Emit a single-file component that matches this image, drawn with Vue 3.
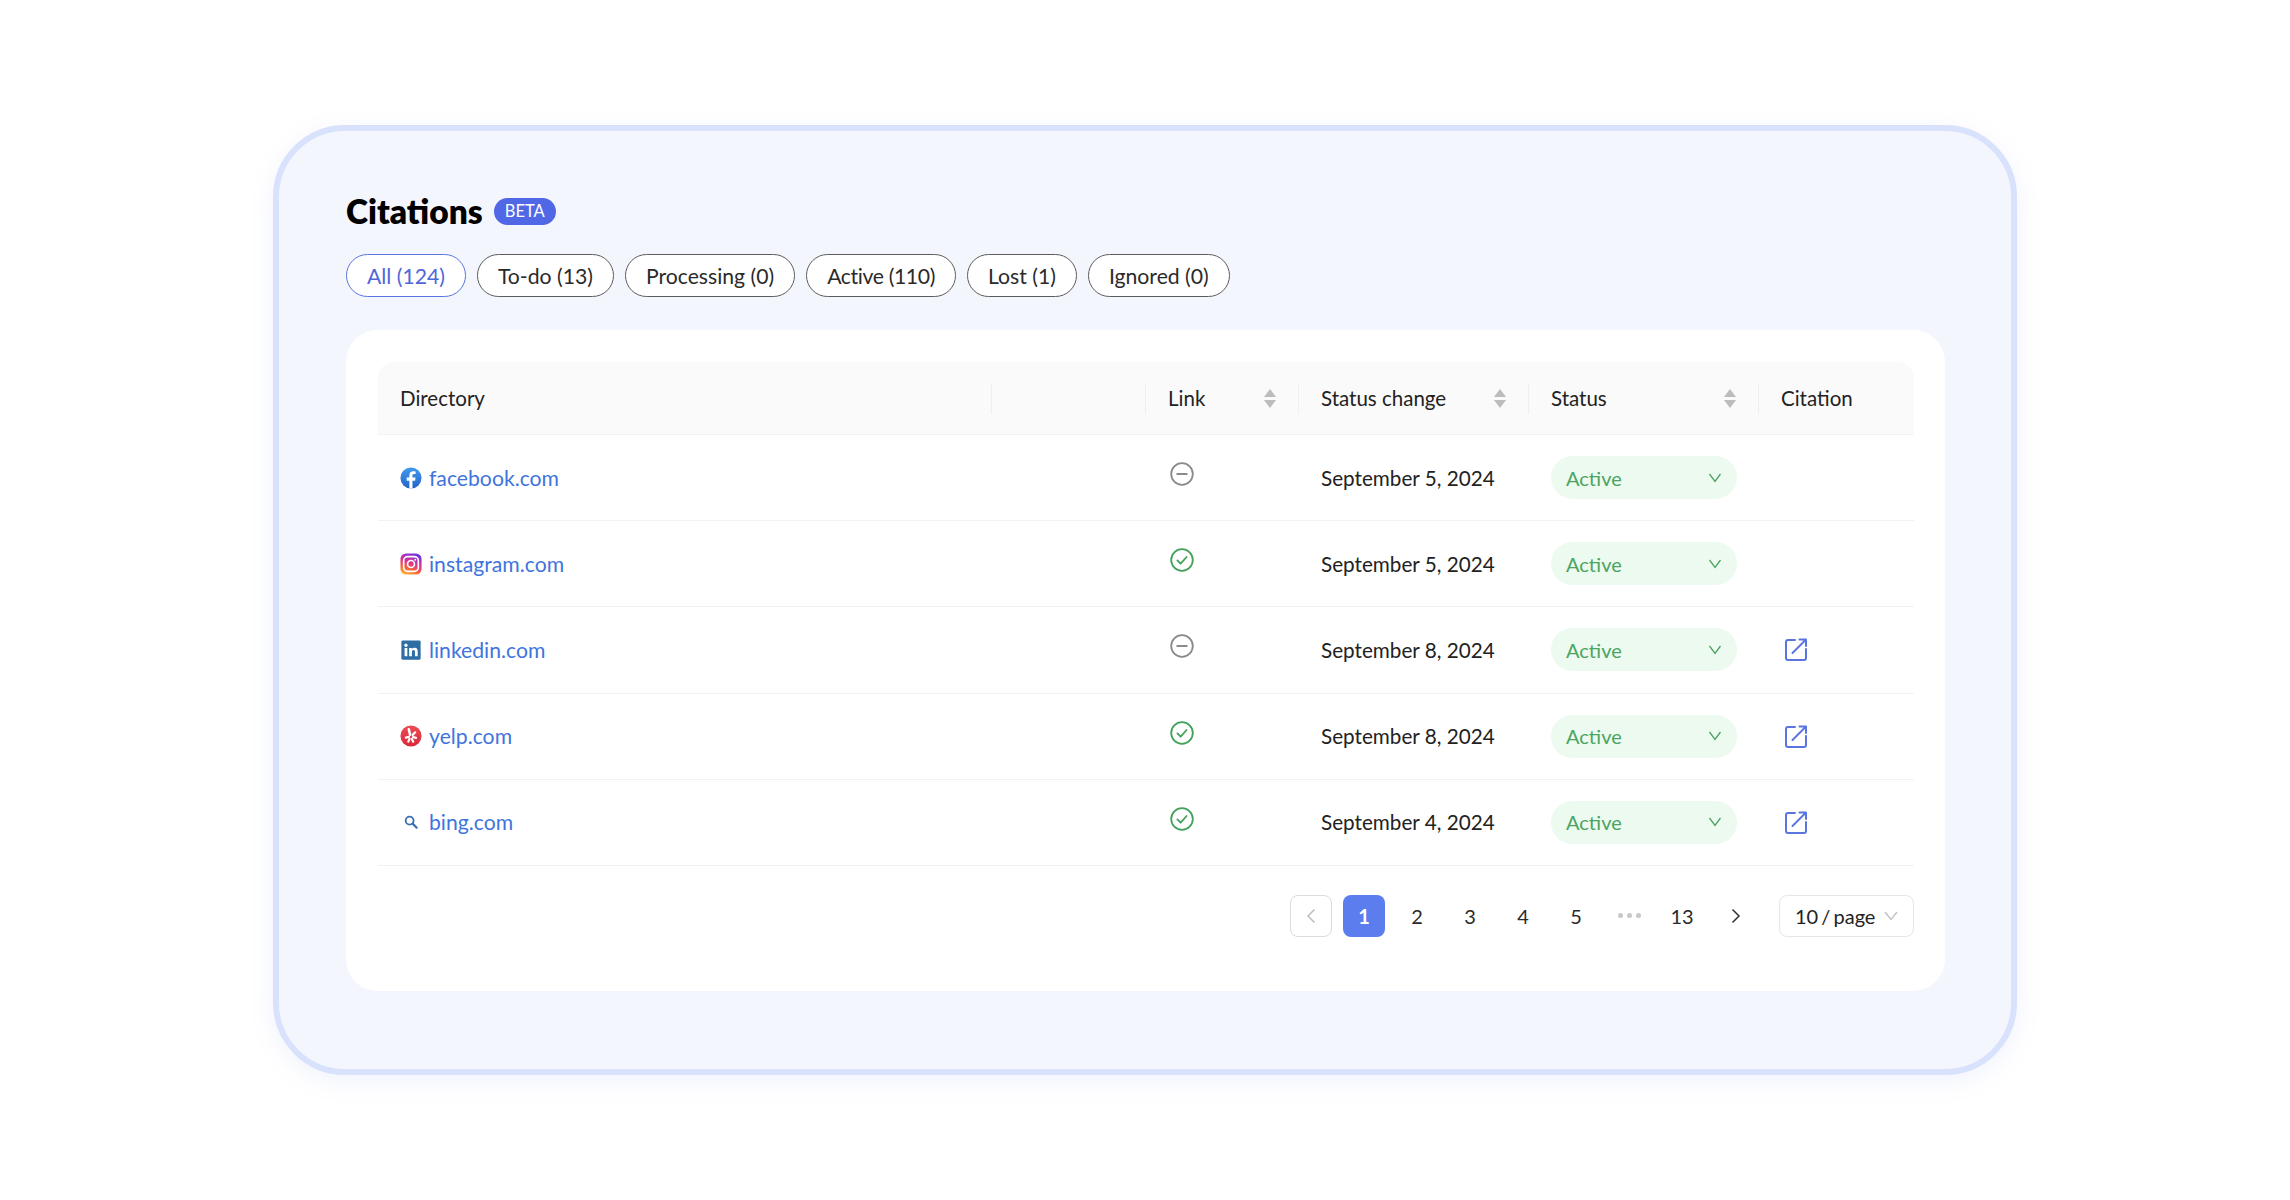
<template>
  <div class="page">
    <section class="panel">
      <div class="title-row">
        <h1>Citations</h1>
        <span class="beta">BETA</span>
      </div>

      <div class="chips">
        <button v-for="(chip, i) in chips" :key="chip" class="chip" :class="{ on: i === 0 }">{{ chip }}</button>
      </div>

      <div class="card">
        <div class="table">
          <div class="row head">
            <div class="th">Directory</div>
            <div class="th"></div>
            <div class="th">Link<span class="sorter"><i class="up"></i><i class="down"></i></span></div>
            <div class="th">Status change<span class="sorter"><i class="up"></i><i class="down"></i></span></div>
            <div class="th">Status<span class="sorter"><i class="up"></i><i class="down"></i></span></div>
            <div class="th last">Citation</div>
          </div>

          <div v-for="item in rows" :key="item.name" class="row body">
            <div class="td site">
              <span class="favicon">
                <svg v-if="item.icon === 'fb'" viewBox="0 0 24 24" width="22" height="22">
                  <defs>
                    <linearGradient id="fbg" x1="0" y1="0" x2="0" y2="1">
                      <stop offset="0" stop-color="#3f9af0" />
                      <stop offset="1" stop-color="#2463c8" />
                    </linearGradient>
                  </defs>
                  <circle cx="12" cy="12" r="11.5" fill="url(#fbg)" />
                  <path d="M13.6 23.5v-8.6h2.9l.5-3.4h-3.4V9.4c0-1 .4-1.7 1.8-1.7H17V4.8c-.4 0-1.400-.2-2.500-.2-2.600 0-4.300 1.500-4.300 4.300v2.600H7.300v3.400h2.900v8.600z" fill="#fff" />
                </svg>
                <svg v-else-if="item.icon === 'ig'" viewBox="0 0 24 24" width="22" height="22">
                  <defs>
                    <linearGradient id="igg" x1="0.1" y1="1" x2="0.5" y2="0">
                      <stop offset="0" stop-color="#fdc22e" />
                      <stop offset="0.35" stop-color="#f5603f" />
                      <stop offset="0.65" stop-color="#d62f9a" />
                      <stop offset="1" stop-color="#7a35d8" />
                    </linearGradient>
                  </defs>
                  <rect x="0.500" y="0.500" width="23" height="23" rx="6" fill="url(#igg)" />
                  <rect x="4" y="4" width="16" height="16" rx="4.500" fill="none" stroke="#fff" stroke-width="1.800" />
                  <circle cx="12" cy="12" r="3.800" fill="none" stroke="#fff" stroke-width="1.800" />
                  <circle cx="16.600" cy="7.400" r="1" fill="#fff" />
                </svg>
                <svg v-else-if="item.icon === 'li'" viewBox="0 0 24 24" width="22" height="22">
                  <rect x="1.500" y="1.500" width="21" height="21" rx="1.500" fill="#2f6ea5" />
                  <rect x="5" y="9.800" width="3" height="9" fill="#fff" />
                  <circle cx="6.500" cy="6.800" r="1.800" fill="#fff" />
                  <path d="M10 9.800h2.900V11c.5-.8 1.500-1.500 3-1.500 2.700 0 3.400 1.700 3.400 4.200v5.100h-3v-4.500c0-1.200-.2-2.200-1.500-2.200s-1.800 1-1.800 2.200v4.500h-3z" fill="#fff" />
                </svg>
                <svg v-else-if="item.icon === 'yelp'" viewBox="0 0 24 24" width="22" height="22">
                  <defs>
                    <linearGradient id="yg" x1="0" y1="0" x2="0" y2="1">
                      <stop offset="0" stop-color="#ee4a55" />
                      <stop offset="1" stop-color="#d92a3a" />
                    </linearGradient>
                  </defs>
                  <circle cx="12" cy="12" r="11.500" fill="url(#yg)" />
                  <g stroke="#fff" stroke-linecap="round" fill="none">
                    <path d="M11 10.600 9.600 4.600" stroke-width="2.800" />
                    <path d="M13.800 10.800 16.600 8" stroke-width="2.400" />
                    <path d="M14.200 13.200l3.300.8" stroke-width="2.400" />
                    <path d="M12.900 15.200l1.500 3" stroke-width="2.400" />
                    <path d="M10.400 15l-1.300 3.200" stroke-width="2.400" />
                    <path d="M9.800 12.800l-3.400 1" stroke-width="2.400" />
                  </g>
                </svg>
                <svg v-else viewBox="0 0 24 24" width="22" height="22">
                  <circle cx="10.500" cy="10.500" r="4.300" fill="none" stroke="#3c6eb4" stroke-width="2" />
                  <path d="M13.800 13.800l4.400 4.400" stroke="#3c6eb4" stroke-width="2.400" stroke-linecap="round" />
                </svg>
              </span>
              <a class="site-link">{{ item.name }}</a>
            </div>
            <div class="td"></div>
            <div class="td link-cell">
              <svg v-if="item.ok" viewBox="0 0 24 24" width="24" height="24" fill="none" stroke="#43a25a" stroke-width="1.800" stroke-linecap="round" stroke-linejoin="round">
                <circle cx="12" cy="12" r="10.800" />
                <path d="M7.400 12.400l3.200 3.300 6-6.700" />
              </svg>
              <svg v-else viewBox="0 0 24 24" width="24" height="24" fill="none" stroke="#8a8a8a" stroke-width="1.800" stroke-linecap="round">
                <circle cx="12" cy="12" r="10.800" />
                <path d="M7.200 12h9.600" />
              </svg>
            </div>
            <div class="td date">{{ item.date }}</div>
            <div class="td">
              <div class="status">
                <span>Active</span>
                <svg viewBox="0 0 14 10" width="14" height="10" fill="none" stroke="#4aa562" stroke-width="1.300">
                  <path d="M1.500 1 7 8.500 12.500 1" />
                </svg>
              </div>
            </div>
            <div class="td citation">
              <svg v-if="item.cite" viewBox="0 0 22 23" width="22" height="23" fill="none" stroke="#5a75e0" stroke-width="2" stroke-linecap="round" stroke-linejoin="round">
                <path d="M10 2H3a2 2 0 0 0-2 2v16a2 2 0 0 0 2 2h16a2 2 0 0 0 2-2v-9" />
                <path d="M7.500 15 20.500 2M14.500 1.500h6.500V8" />
              </svg>
            </div>
          </div>
        </div>

        <div class="pager">
          <button class="pg prev">
            <svg viewBox="0 0 10 16" width="10" height="16" fill="none" stroke="#bdbdbd" stroke-width="1.500"><path d="M8.500 1.500 2 8l6.500 6.500" /></svg>
          </button>
          <button v-for="p in pagesA" :key="p" class="pg" :class="{ cur: p === 1 }">{{ p }}</button>
          <span class="pg dots"><i></i><i></i><i></i></span>
          <button class="pg">13</button>
          <button class="pg next">
            <svg viewBox="0 0 10 16" width="10" height="16" fill="none" stroke="#333" stroke-width="1.500"><path d="M1.500 1.500 8 8l-6.500 6.500" /></svg>
          </button>
          <div class="size">
            <span>10 / page</span>
            <svg viewBox="0 0 14 10" width="14" height="10" fill="none" stroke="#bfbfbf" stroke-width="1.300"><path d="M1 1 7 8.500 13 1" /></svg>
          </div>
        </div>
      </div>
    </section>
  </div>
</template>

<script setup>
const chips = ['All (124)', 'To-do (13)', 'Processing (0)', 'Active (110)', 'Lost (1)', 'Ignored (0)']
const pagesA = [1, 2, 3, 4, 5]

const rows = [
  { name: 'facebook.com', icon: 'fb', ok: false, date: 'September 5, 2024', cite: false },
  { name: 'instagram.com', icon: 'ig', ok: true, date: 'September 5, 2024', cite: false },
  { name: 'linkedin.com', icon: 'li', ok: false, date: 'September 8, 2024', cite: true },
  { name: 'yelp.com', icon: 'yelp', ok: true, date: 'September 8, 2024', cite: true },
  { name: 'bing.com', icon: 'bing', ok: true, date: 'September 4, 2024', cite: true },
]
</script>

<style>
html, body {
  margin: 0;
  background: #fff;
}
</style>

<style scoped>
.page {
  min-height: 1200px;
  display: flex;
  align-items: center;
  justify-content: center;
  font-family: Lato, "Noto Sans", sans-serif;
  font-size: 20px;
  color: #222;
}

.panel {
  box-sizing: border-box;
  width: 1744px;
  height: 950px;
  padding: 64px 66px 0 67px;
  background: #f4f6fe;
  border: 6px solid #d9e2fd;
  border-radius: 72px;
  box-shadow: 0 6px 24px rgba(120, 140, 230, 0.1);
}

.title-row {
  display: flex;
  align-items: center;
  gap: 11px;
  height: 32px;
}

h1 {
  margin: 0;
  font-size: 33.500px;
  line-height: 32px;
  font-weight: 800;
  color: #000;
}

.beta {
  width: 62px;
  height: 27px;
  border-radius: 14px;
  background: #5068e6;
  color: #fff;
  font-size: 16.500px;
  line-height: 27px;
  text-align: center;
}

.chips {
  display: flex;
  gap: 11px;
  margin-top: 27px;
}

.chip {
  height: 43px;
  padding: 0 20px;
  border: 1px solid #5c5c5c;
  border-radius: 22px;
  background: #fff;
  font: inherit;
  font-size: 21.200px;
  color: #2a2a2a;
}

.chip:nth-child(4) {
  letter-spacing: -0.370px;
}

.chip.on {
  border-color: #5a75e0;
  color: #4f66d8;
}

.card {
  margin-top: 33px;
  padding: 32px 31px 54px 32px;
  background: #fff;
  border-radius: 32px;
}

.row {
  display: grid;
  grid-template-columns: 614px 154px 153px 230px 230px 155px;
}

.head {
  height: 73px;
  background: #fafafa;
  border-radius: 16px 16px 0 0;
  border-bottom: 1px solid #f2f2f2;
  box-sizing: border-box;
  font-size: 20.500px;
}

.th {
  position: relative;
  display: flex;
  align-items: center;
  justify-content: space-between;
  padding: 0 23px 0 22px;
}

.th:not(.last)::after {
  content: '';
  position: absolute;
  right: 0;
  top: 22px;
  width: 1px;
  height: 30px;
  background: #efefef;
}

.sorter {
  display: flex;
  flex-direction: column;
  gap: 3px;
}

.sorter i {
  display: block;
  width: 0;
  height: 0;
  border-left: 6px solid transparent;
  border-right: 6px solid transparent;
}

.sorter .up {
  border-bottom: 8px solid #bcbcbc;
}

.sorter .down {
  border-top: 8px solid #bcbcbc;
}

.body {
  height: 86.200px;
  box-sizing: border-box;
  border-bottom: 1px solid #f2f2f2;
}

.td {
  display: flex;
  align-items: center;
  padding: 0 22px;
  min-width: 0;
}

.site {
  gap: 7px;
}

.favicon {
  display: flex;
  width: 22px;
  height: 22px;
  flex: none;
}

.site-link {
  font-size: 21.200px;
  color: #3f74dd;
}

.date {
  font-size: 20.700px;
}

.link-cell svg {
  margin-top: -7px;
  margin-left: 2px;
}

.status {
  box-sizing: border-box;
  width: 188px;
  height: 43px;
  padding: 0 15px;
  display: flex;
  align-items: center;
  justify-content: space-between;
  background: #edfaf0;
  border-radius: 22px;
  color: #4aa562;
}

.citation svg {
  margin-left: 4px;
}

.pager {
  display: flex;
  justify-content: flex-end;
  gap: 11px;
  margin-top: 29px;
}

.pg {
  box-sizing: border-box;
  width: 42px;
  height: 42px;
  padding: 0;
  display: flex;
  align-items: center;
  justify-content: center;
  border: 0;
  border-radius: 8px;
  background: transparent;
  font: inherit;
  color: #2a2a2a;
}

.next svg {
  margin-left: 2px;
}

.prev {
  border: 1px solid #dcdcdc;
  background: #fff;
}

.cur {
  background: #5b7dee;
  color: #fff;
  font-weight: 700;
}

.dots {
  gap: 4px;
}

.dots i {
  width: 5px;
  height: 5px;
  border-radius: 50%;
  background: #c8c8c8;
}

.size {
  box-sizing: border-box;
  width: 135px;
  height: 42px;
  margin-left: 12px;
  padding: 0 15px;
  display: flex;
  align-items: center;
  justify-content: space-between;
  border: 1px solid #e6e6e6;
  border-radius: 8px;
  word-spacing: -2px;
}
</style>
